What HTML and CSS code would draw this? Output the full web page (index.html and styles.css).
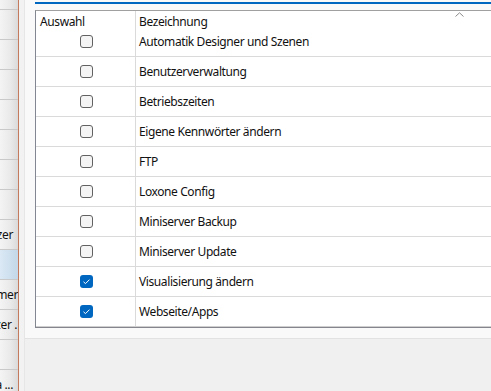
FILE: index.html
```html
<!DOCTYPE html>
<html lang="de">
<head>
<meta charset="utf-8">
<link rel="stylesheet" href="styles.css">
</head>
<body>
<div class="app">
  <div class="strip">
    <div class="scell first"></div>
    <div class="scell"></div>
    <div class="scell"></div>
    <div class="scell"></div>
    <div class="scell"></div>
    <div class="scell"></div>
    <div class="scell"></div>
    <div class="scell"></div>
    <div class="scell"><span class="st p5">Benutzer</span></div>
    <div class="scell sel"></div>
    <div class="scell"><span class="st p0">Programmer</span></div>
    <div class="scell"><span class="st p1">Nutzer .</span></div>
    <div class="scell"></div>
    <div class="scell"><span class="st p5">Kamera ...</span></div>
  </div>
  <div class="divider"></div>
  <div class="gap"></div>
  <div class="panel">
    <div class="upper">
      <div class="blue"></div>
      <div class="table">
        <div class="head">
          <div class="c1">Auswahl</div>
          <div class="c2">Bezeichnung</div>
          <svg class="sort" width="9" height="5" viewBox="0 0 9 5"><path d="M0.5 4.5 L4.5 0.8 L8.5 4.5" fill="none" stroke="#8a8a8a" stroke-width="1"/></svg>
        </div>
        <div class="row"><div class="c1"><span class="cb"></span></div><div class="c2">Automatik Designer und Szenen</div></div>
        <div class="row"><div class="c1"><span class="cb"></span></div><div class="c2">Benutzerverwaltung</div></div>
        <div class="row"><div class="c1"><span class="cb"></span></div><div class="c2">Betriebszeiten</div></div>
        <div class="row"><div class="c1"><span class="cb"></span></div><div class="c2">Eigene Kennwörter ändern</div></div>
        <div class="row"><div class="c1"><span class="cb"></span></div><div class="c2">FTP</div></div>
        <div class="row"><div class="c1"><span class="cb"></span></div><div class="c2">Loxone Config</div></div>
        <div class="row"><div class="c1"><span class="cb"></span></div><div class="c2">Miniserver Backup</div></div>
        <div class="row"><div class="c1"><span class="cb"></span></div><div class="c2">Miniserver Update</div></div>
        <div class="row"><div class="c1"><span class="cb on"><svg width="13" height="13" viewBox="0 0 13 13"><path d="M3.5 6.8 L5.5 8.6 L9.5 4.6" fill="none" stroke="#fff" stroke-width="1"/></svg></span></div><div class="c2">Visualisierung ändern</div></div>
        <div class="row last"><div class="c1"><span class="cb on"><svg width="13" height="13" viewBox="0 0 13 13"><path d="M3.5 6.8 L5.5 8.6 L9.5 4.6" fill="none" stroke="#fff" stroke-width="1"/></svg></span></div><div class="c2">Webseite/Apps</div></div>
      </div>
    </div>
    <div class="lower"></div>
  </div>
</div>
</body>
</html>
```
FILE: styles.css
```css
html, body {
  margin: 0;
  padding: 0;
  width: 491px;
  height: 391px;
  overflow: hidden;
  background: #f0f0f0;
}
body {
  font-family: "Noto Sans", "Open Sans", sans-serif;
  font-size: 12px;
  letter-spacing: -0.4px;
  color: #111;
}
.app {
  display: flex;
  height: 391px;
}
.strip {
  width: 18px;
  flex: none;
  overflow: hidden;
  background: linear-gradient(to right, #f4f4f4, #e9e9e9 60%, #dadada);
  display: flex;
  flex-direction: column;
}
.scell {
  height: 29px;
  flex: none;
  border-bottom: 1px solid #c9c9c9;
  display: flex;
  align-items: center;
  justify-content: flex-end;
  white-space: nowrap;
  overflow: hidden;
}
.scell.first { height: 9px; }
.scell.sel {
  background: linear-gradient(to right, #dbe9f5, #c3d7e8);
}
.st { line-height: 16px; }
.p0 { padding-right: 0; }
.p1 { padding-right: 1px; }
.p5 { padding-right: 5px; }
.divider {
  width: 1px;
  flex: none;
  background: #c47a5c;
}
.gap {
  width: 5px;
  flex: none;
  background: #f2f2f2;
}
.panel {
  flex: 1;
  display: flex;
  flex-direction: column;
  border-left: 1px solid #e6e6e6;
}
.upper {
  background: #f9f9f9;
  padding-left: 10px;
  height: 339px;
  box-sizing: border-box;
  border-bottom: 1px solid #e2e2e2;
}
.lower {
  flex: 1;
  background: #f0f0f0;
}
.blue {
  margin-top: 2px;
  height: 2px;
  background: #0067c0;
}
.table {
  margin-top: 6px;
  background: #fff;
  border-left: 1px solid #828790;
  border-top: 1px solid #a0a0a0;
  border-bottom: 1px solid #85858d;
}
.head {
  position: relative;
  display: flex;
  height: 16px;
}
.head .c1, .head .c2 {
  padding-top: 3px;
  line-height: 16px;
  align-items: flex-start;
}
.head .c1 {
  justify-content: flex-start;
  padding-left: 4px;
}
.sort {
  position: absolute;
  left: 419px;
  top: 1px;
}
.row {
  display: flex;
  height: 29px;
  border-bottom: 1px solid #dadada;
}
.row.last {
  border-bottom-color: #cfcfcf;
}
.c1 {
  width: 100px;
  flex: none;
  box-sizing: border-box;
  border-right: 1px solid #dadada;
  display: flex;
  align-items: center;
  justify-content: center;
}
.c2 {
  flex: 1;
  padding-left: 3px;
  display: flex;
  align-items: center;
  white-space: nowrap;
}
.cb {
  width: 13px;
  height: 13px;
  box-sizing: border-box;
  border: 1px solid #616161;
  border-radius: 3px;
  background: #f4f4f4;
  margin-left: 1px;
  display: block;
  position: relative;
}
.cb.on {
  border: none;
  background: #0067c0;
}
.cb svg { display: block; }
```
